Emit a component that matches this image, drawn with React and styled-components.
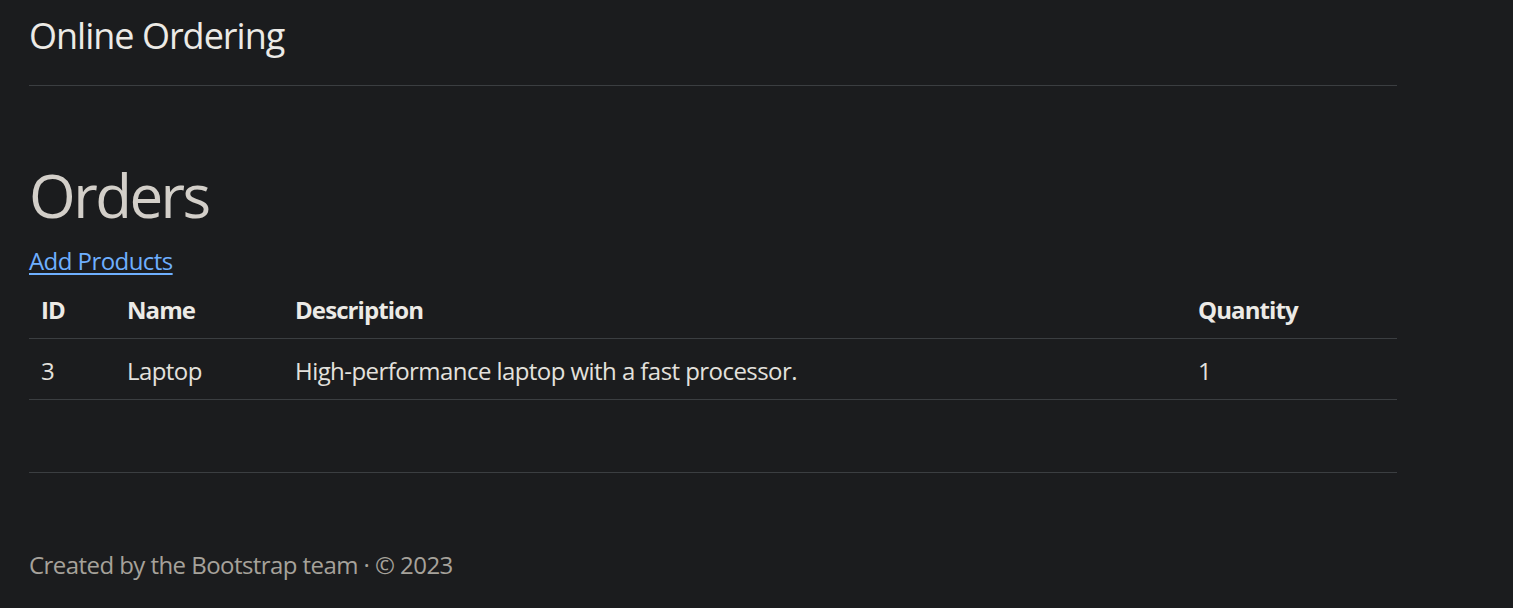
import React from "react";
import styled, { createGlobalStyle } from "styled-components";

const GlobalStyle = createGlobalStyle`
  html, body {
    margin: 0;
    padding: 0;
    background: #1b1c1e;
  }
  body {
    font-family: "Open Sans", "Noto Sans", sans-serif;
    font-size: 24px;
    line-height: 36px;
    letter-spacing: -0.56px;
    color: #e3e1dd;
  }
`;

const Page = styled.div`
  padding: 0 29px;
`;

const Container = styled.div`
  width: 1368px;
`;

const Header = styled.header`
  padding: 14px 0 28px;
  border-bottom: 1px solid #3b3e41;
`;

const Brand = styled.span`
  display: block;
  font-size: 36px;
  line-height: 43px;
  letter-spacing: -1px;
  color: #eceae6;
`;

const Title = styled.h1`
  margin: 73px 0 12px;
  font-size: 60px;
  line-height: 72px;
  font-weight: 400;
  letter-spacing: -2.5px;
  color: #d3cfc9;
`;

const Link = styled.a`
  color: #6eaffe;
  text-decoration: underline;
  text-underline-offset: 3px;
`;

const Table = styled.table`
  width: 100%;
  margin-top: -1px;
  border-collapse: collapse;
  table-layout: fixed;
`;

const HeadCell = styled.th`
  text-align: left;
  font-weight: 700;
  letter-spacing: -0.9px;
  padding: 14px 12px 10px;
  color: #eceae6;
  border-bottom: 1px solid #3b3e41;
`;

const Cell = styled.td`
  padding: 14px 12px 10px;
  color: #e3e1dd;
  border-bottom: 1px solid #3b3e41;
`;

const Footer = styled.footer`
  margin-top: 72px;
  padding-top: 74px;
  border-top: 1px solid #3b3e41;
  color: #a6a29b;
`;

const columns = [
  { key: "id", label: "ID", width: 86 },
  { key: "name", label: "Name", width: 168 },
  { key: "description", label: "Description", width: 903 },
  { key: "quantity", label: "Quantity", width: 211 },
];

const orders = [
  { id: 3, name: "Laptop", description: "High-performance laptop with a fast processor.", quantity: 1 },
];

export default function App() {
  return (
    <>
      <GlobalStyle />
      <Page>
        <Container>
          <Header>
            <Brand>Online Ordering</Brand>
          </Header>
          <main>
            <Title>Orders</Title>
            <Link href="#">Add Products</Link>
            <Table>
              <colgroup>
                {columns.map((c) => (
                  <col key={c.key} style={{ width: c.width }} />
                ))}
              </colgroup>
              <thead>
                <tr>
                  {columns.map((c) => (
                    <HeadCell key={c.key}>{c.label}</HeadCell>
                  ))}
                </tr>
              </thead>
              <tbody>
                {orders.map((o) => (
                  <tr key={o.id}>
                    {columns.map((c) => (
                      <Cell key={c.key}>{o[c.key]}</Cell>
                    ))}
                  </tr>
                ))}
              </tbody>
            </Table>
          </main>
          <Footer>Created by the Bootstrap team · © 2023</Footer>
        </Container>
      </Page>
    </>
  );
}
